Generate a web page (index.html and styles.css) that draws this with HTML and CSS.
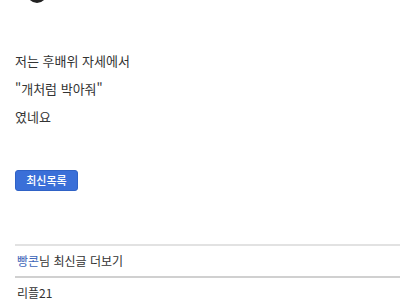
FILE: index.html
```html
<!DOCTYPE html>
<html lang="ko">
<head>
<meta charset="utf-8">
<link rel="stylesheet" href="styles.css">
</head>
<body>
<div class="page">
  <div class="author">
    <span class="avatar"></span>
    <span class="author-meta">빵콘 · 2024.03.12 조회 1234</span>
  </div>
  <div class="content">
    <p>저는 후배위 자세에서</p>
    <p>"개처럼 박아줘"</p>
    <p>였네요</p>
  </div>
  <button class="btn">최신목록</button>
  <div class="more">
    <a class="nick">빵콘</a>님 최신글 더보기
  </div>
  <div class="reply">리플21</div>
</div>
</body>
</html>
```
FILE: styles.css
```css
html, body {
  margin: 0;
  padding: 0;
  background: #fff;
}
body {
  font-family: "Noto Sans CJK KR", "Noto Sans", sans-serif;
  color: #333;
  overflow: hidden;
}
.page {
  padding-left: 15px;
  margin-top: -17px;
}
.author {
  display: flex;
  align-items: flex-start;
  gap: 8px;
  height: 19px;
  padding-left: 12px;
}
.avatar {
  width: 20px;
  height: 20px;
  border-radius: 50%;
  background: #222;
}
.author-meta {
  font-size: 11px;
  color: #e6e6e6;
  line-height: 19px;
}
.content {
  margin-top: 45px;
}
.content p {
  margin: 0;
  font-size: 13px;
  line-height: 28px;
  color: #333;
}
.btn {
  display: block;
  margin-top: 39px;
  width: 63px;
  height: 21px;
  padding: 0;
  border: 1px solid #2f62c6;
  border-radius: 3px;
  background: #3a6fd8;
  color: #fff;
  font-family: inherit;
  font-size: 11px;
  font-weight: 500;
  line-height: 19px;
}
.more {
  margin-top: 53px;
  border-top: 2px solid #e2e2e2;
  border-bottom: 2px solid #d0d0d0;
  height: 30px;
  line-height: 30px;
  font-size: 12px;
  color: #333;
  padding-left: 2px;
}
.nick {
  color: #3b64b8;
}
.reply {
  font-size: 12px;
  line-height: 30px;
  padding-left: 2px;
  color: #333;
}
```
